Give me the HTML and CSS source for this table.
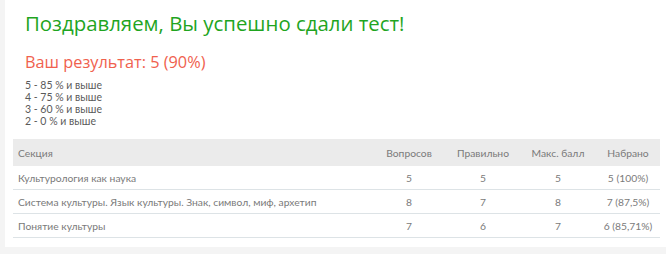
FILE: index.html
```html
<!DOCTYPE html>
<html lang="ru">
<head>
<meta charset="utf-8">
<link rel="stylesheet" href="styles.css">
</head>
<body>
<div class="card">
  <h1 class="title">Поздравляем, Вы успешно сдали тест!</h1>
  <h2 class="result">Ваш результат: 5 (90%)</h2>
  <div class="scale">
    <div>5 - 85 % и выше</div>
    <div>4 - 75 % и выше</div>
    <div>3 - 60 % и выше</div>
    <div>2 - 0 % и выше</div>
  </div>
  <table class="stats">
    <colgroup>
      <col class="c-sec">
      <col class="c-q">
      <col class="c-r">
      <col class="c-m">
      <col class="c-s">
    </colgroup>
    <thead>
      <tr>
        <th class="sec">Секция</th>
        <th class="num">Вопросов</th>
        <th class="num">Правильно</th>
        <th class="num">Макс. балл</th>
        <th class="num">Набрано</th>
      </tr>
    </thead>
    <tbody>
      <tr>
        <td class="sec">Культурология как наука</td>
        <td class="num">5</td><td class="num">5</td><td class="num">5</td><td class="num">5 (100%)</td>
      </tr>
      <tr>
        <td class="sec">Система культуры. Язык культуры. Знак, символ, миф, архетип</td>
        <td class="num">8</td><td class="num">7</td><td class="num">8</td><td class="num">7 (87,5%)</td>
      </tr>
      <tr>
        <td class="sec">Понятие культуры</td>
        <td class="num">7</td><td class="num">6</td><td class="num">7</td><td class="num">6 (85,71%)</td>
      </tr>
    </tbody>
  </table>
</div>
</body>
</html>
```
FILE: styles.css
```css
html, body {
  margin: 0;
  padding: 0;
  background: #f4f4f4;
}
body {
  padding-left: 5px;
  height: 254px;
  box-sizing: border-box;
}
.card {
  background: #fff;
  height: 247px;
  box-sizing: border-box;
  padding: 8px 6px 0 8px;
}
.title {
  margin: 0 0 0 12px;
  font-family: "Open Sans", sans-serif;
  font-weight: 400;
  font-size: 20.4px;
  line-height: 30px;
  color: #1fa51f;
}
.result {
  margin: 13px 0 0 12px;
  font-family: "Open Sans", sans-serif;
  font-weight: 400;
  font-size: 16.3px;
  line-height: 22px;
  color: #f0614e;
}
.scale {
  margin: 6px 0 0 12px;
  font-family: "Lato", sans-serif;
  font-size: 10.5px;
  line-height: 12px;
  color: #5a5a5a;
}
.stats {
  margin-top: 12px;
  width: 647px;
  table-layout: fixed;
  border-collapse: collapse;
  font-family: "Lato", sans-serif;
  font-size: 10.3px;
  color: #7a7a7a;
}
.c-sec { width: 359px; }
.c-q { width: 74px; }
.c-r { width: 74px; }
.c-m { width: 76px; }
.c-s { width: 64px; }
.stats th {
  background: #ebebeb;
  font-weight: 400;
  height: 27px;
  padding: 0;
}
.stats td {
  height: 23px;
  padding: 0;
  border-bottom: 1px solid #dde3e6;
}
.stats .sec { text-align: left; padding-left: 5px; }
.stats .num { text-align: center; }
```
